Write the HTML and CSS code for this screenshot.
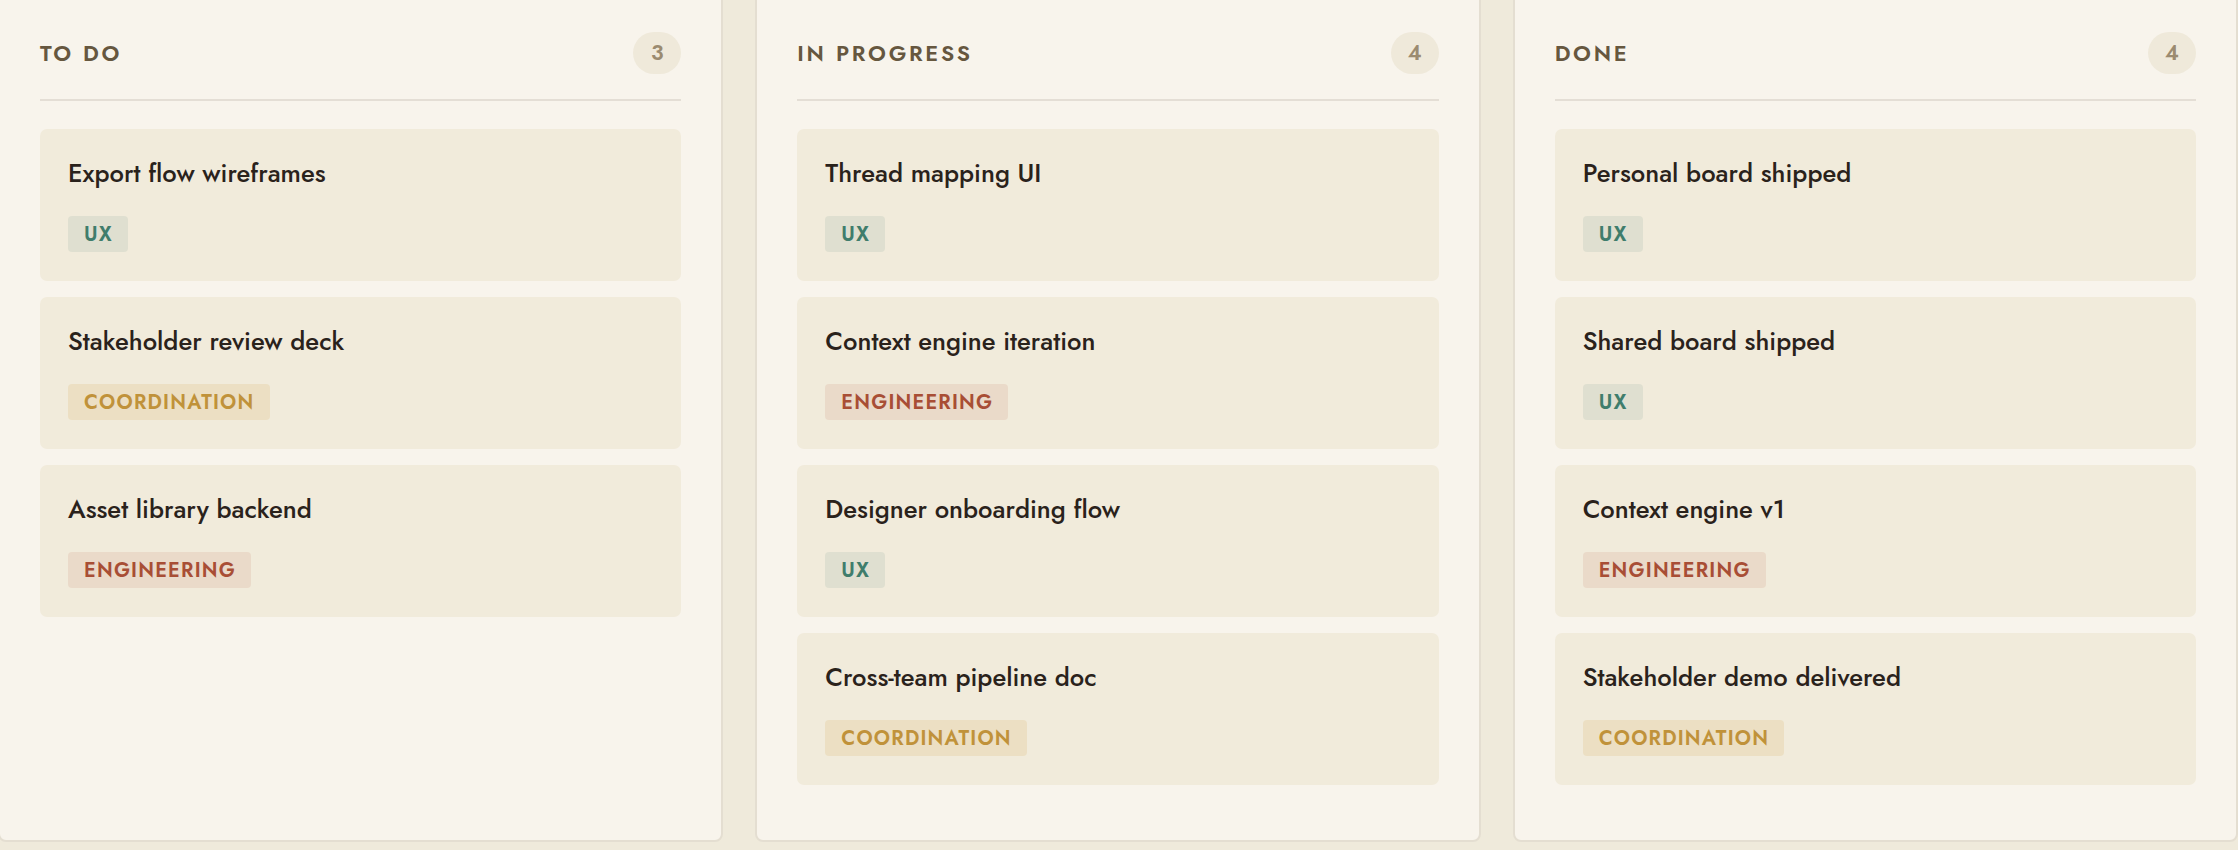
FILE: index.html
```html
<!DOCTYPE html>
<html lang="en">
<head>
<meta charset="utf-8">
<title>Board</title>
<link rel="stylesheet" href="styles.css">
</head>
<body>
<main class="board">
  <section class="column">
    <header class="column-head">
      <h2 class="column-title">TO DO</h2>
      <span class="count">3</span>
    </header>
    <div class="cards">
      <article class="card"><h3 class="card-title">Export flow wireframes</h3><span class="tag tag-ux">UX</span></article>
      <article class="card"><h3 class="card-title">Stakeholder review deck</h3><span class="tag tag-coord">COORDINATION</span></article>
      <article class="card"><h3 class="card-title">Asset library backend</h3><span class="tag tag-eng">ENGINEERING</span></article>
    </div>
  </section>
  <section class="column">
    <header class="column-head">
      <h2 class="column-title">IN PROGRESS</h2>
      <span class="count">4</span>
    </header>
    <div class="cards">
      <article class="card"><h3 class="card-title">Thread mapping UI</h3><span class="tag tag-ux">UX</span></article>
      <article class="card"><h3 class="card-title">Context engine iteration</h3><span class="tag tag-eng">ENGINEERING</span></article>
      <article class="card"><h3 class="card-title">Designer onboarding flow</h3><span class="tag tag-ux">UX</span></article>
      <article class="card"><h3 class="card-title">Cross-team pipeline doc</h3><span class="tag tag-coord">COORDINATION</span></article>
    </div>
  </section>
  <section class="column">
    <header class="column-head">
      <h2 class="column-title">DONE</h2>
      <span class="count">4</span>
    </header>
    <div class="cards">
      <article class="card"><h3 class="card-title">Personal board shipped</h3><span class="tag tag-ux">UX</span></article>
      <article class="card"><h3 class="card-title">Shared board shipped</h3><span class="tag tag-ux">UX</span></article>
      <article class="card"><h3 class="card-title">Context engine v1</h3><span class="tag tag-eng">ENGINEERING</span></article>
      <article class="card"><h3 class="card-title">Stakeholder demo delivered</h3><span class="tag tag-coord">COORDINATION</span></article>
    </div>
  </section>
</main>
</body>
</html>
```
FILE: styles.css
```css
* { box-sizing: border-box; }

html, body {
  margin: 0;
  padding: 0;
  height: 850px;
  overflow: hidden;
  background: #efeadb;
  font-family: "Jost", "Lato", "Noto Sans", sans-serif;
}

.board {
  display: grid;
  grid-template-columns: repeat(3, 1fr);
  gap: 32px;
  width: 2240px;
  margin: -9px 0 0 -2px;
  align-items: stretch;
}

.column {
  background: #f8f4ec;
  border: 2px solid #e4ded1;
  border-radius: 8px;
  padding: 40px 40px 55px;
}

.column-head {
  display: flex;
  align-items: center;
  justify-content: space-between;
  height: 68px;
  padding-bottom: 26px;
  border-bottom: 2px solid #e4ded5;
  margin-bottom: 28px;
}

.column-title {
  margin: 0;
  font-size: 22px;
  font-weight: 600;
  letter-spacing: 2.7px;
  color: #66573f;
  line-height: 1;
}

.count {
  display: inline-flex;
  align-items: center;
  justify-content: center;
  min-width: 48px;
  height: 42px;
  padding: 0 16px;
  border-radius: 21px;
  background: #efe9da;
  color: #9b8b70;
  font-size: 21px;
  font-weight: 600;
}

.cards {
  display: flex;
  flex-direction: column;
  gap: 16px;
}

.card {
  background: #f1ebdb;
  border-radius: 7px;
  padding: 29px 28px 28px;
  display: flex;
  flex-direction: column;
  align-items: flex-start;
  gap: 26px;
  height: 152px;
}

.card-title {
  margin: 0;
  font-size: 25.6px;
  line-height: 32px;
  font-weight: 500;
  color: #2a221b;
}

.tag {
  display: inline-flex;
  align-items: center;
  height: 36px;
  padding: 0 15px 0 16px;
  border-radius: 4px;
  font-size: 20px;
  font-weight: 600;
  letter-spacing: 1.2px;
}

.tag-ux { background: #dfdfd0; color: #3f7d6c; }
.tag-coord { background: #ecdfc3; color: #c0923a; }
.tag-eng { background: #eadac9; color: #a84e35; }
```
